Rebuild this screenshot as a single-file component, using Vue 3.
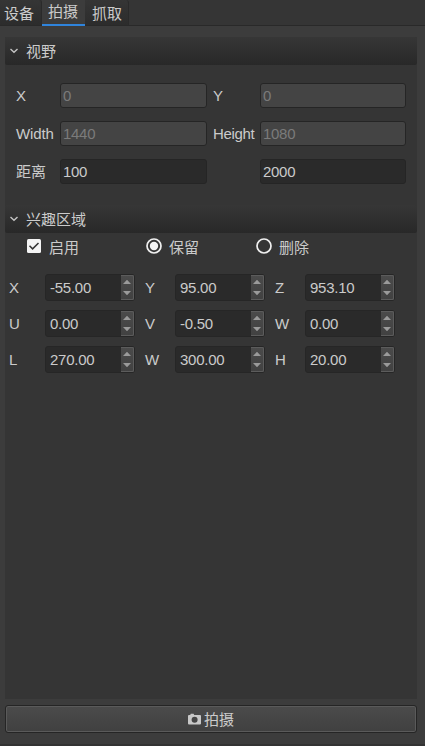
<script setup>
import { ref } from 'vue'

const tabs = ['设备', '拍摄', '抓取']
const active = ref('拍摄')
const fields = [
  { label: 'X', value: '0', disabled: true },
  { label: 'Y', value: '0', disabled: true },
  { label: 'Width', value: '1440', disabled: true },
  { label: 'Height', value: '1080', disabled: true },
  { label: '距离', value: '100' },
  { label: '', value: '2000' },
]
const spins = [
  { label: 'X', value: '-55.00' },
  { label: 'Y', value: '95.00' },
  { label: 'Z', value: '953.10' },
  { label: 'U', value: '0.00' },
  { label: 'V', value: '-0.50' },
  { label: 'W', value: '0.00' },
  { label: 'L', value: '270.00' },
  { label: 'W', value: '300.00' },
  { label: 'H', value: '20.00' },
]
</script>

<template>
  <div class="window">
    <nav class="tabs">
      <div v-for="t in tabs" :key="t" class="tab" :class="{ active: t === active }" @click="active = t">{{ t }}</div>
    </nav>

    <main class="panel">
      <header class="section-head">
        <svg class="chevron" viewBox="0 0 10 8"><path d="M1.5 2 L5 5.3 L8.5 2" /></svg>
        <span>视野</span>
      </header>
      <div class="fields">
        <template v-for="(f, i) in fields" :key="i">
          <label class="field-label" :class="{ cjk: f.label === '距离' }">{{ f.label }}</label>
          <div class="field" :class="{ disabled: f.disabled }">{{ f.value }}</div>
        </template>
      </div>

      <header class="section-head">
        <svg class="chevron" viewBox="0 0 10 8"><path d="M1.5 2 L5 5.3 L8.5 2" /></svg>
        <span>兴趣区域</span>
      </header>
      <div class="options">
        <div class="option">
          <svg class="check" viewBox="0 0 14 14">
            <rect width="14" height="14" rx="1.5" fill="#f4f4f4" />
            <path d="M2.5 6.8 L5.6 9.9 L11.5 4" fill="none" stroke="#333" stroke-width="1.5" />
          </svg>
          <span>启用</span>
        </div>
        <div class="option">
          <svg class="radio" viewBox="0 0 16 16">
            <circle cx="8" cy="8" r="7" fill="none" stroke="#f0f0f0" stroke-width="1.7" />
            <circle cx="8" cy="8" r="4.2" fill="#f4f4f4" />
          </svg>
          <span>保留</span>
        </div>
        <div class="option">
          <svg class="radio" viewBox="0 0 16 16">
            <circle cx="8" cy="8" r="7" fill="none" stroke="#f0f0f0" stroke-width="1.7" />
          </svg>
          <span>删除</span>
        </div>
      </div>
      <div class="spins">
        <div v-for="(s, i) in spins" :key="i" class="spin-cell">
          <label class="spin-label">{{ s.label }}</label>
          <div class="spin">
            <span class="spin-value">{{ s.value }}</span>
            <svg class="stepper" viewBox="0 0 13 25">
              <path d="M2 9 L6 4.8 L10 9 Z M2 16 L6 20.2 L10 16 Z" fill="#9a9a9a" />
            </svg>
          </div>
        </div>
      </div>
    </main>

    <button class="capture">
      <svg class="camera" viewBox="0 0 13 12">
        <path fill="#c8c8c8" fill-rule="evenodd" d="M1 2 H2.2 L2.8 .7 H5.6 L6.2 2 H12 Q13 2 13 3 V10.4 Q13 11.4 12 11.4 H1 Q0 11.4 0 10.4 V3 Q0 2 1 2 Z M6.6 3.7 A3 3 0 1 0 6.6 9.7 A3 3 0 1 0 6.6 3.7 Z" />
      </svg>
      <span>拍摄</span>
    </button>
  </div>
</template>

<style>
body {
  background: #3c3c3c;
}
</style>

<style scoped>
.window {
  box-sizing: border-box;
  width: 425px;
  height: 746px;
  display: flex;
  flex-direction: column;
  background: #3c3c3c;
  border-bottom: 2px solid #333;
  color: #cbcbcb;
  font: 15px/18px "Liberation Sans", "Noto Sans CJK SC", sans-serif;
  overflow: hidden;
}
.tabs {
  box-sizing: border-box;
  flex: none;
  display: flex;
  height: 26px;
  background: #353535;
  border-bottom: 1px solid #292929;
}
.tab {
  box-sizing: border-box;
  height: 25px;
  width: 44px;
  padding: 5px 0 0 7px;
  border-right: 1px solid #2a2a2a;
  border-radius: 0 3px 0 0;
  background: linear-gradient(#353535, #2c2c2c);
  white-space: nowrap;
}
.tab:first-child {
  width: 42px;
  padding-left: 4px;
}
.tab.active {
  width: 43px;
  height: 26px;
  padding: 3px 0 0 6px;
  border-bottom: 2px solid #2f84dc;
  border-right: 0;
  border-radius: 0;
  background: #3c3c3c;
}
.panel {
  flex: none;
  width: 412px;
  height: 662px;
  margin: 11px 0 0 5px;
  background: #353535;
}
.section-head {
  display: flex;
  align-items: center;
  height: 28px;
  padding-left: 4px;
  gap: 7px;
  background: linear-gradient(#363636, #282828);
  border-radius: 2px;
}
.section-head span {
  padding-top: 2px;
}
.chevron {
  width: 10px;
  height: 8px;
  fill: none;
  stroke: #c4c4c4;
  stroke-width: 1.4;
}
.fields {
  display: grid;
  grid-template-columns: 44px 147px 53px 146px;
  grid-auto-rows: 25px;
  row-gap: 13px;
  padding: 18px 0 21px 11px;
}
.field-label {
  line-height: 25px;
  white-space: nowrap;
  letter-spacing: -0.1px;
}
.field-label:nth-child(4n + 3) {
  margin-left: 6px;
  letter-spacing: -0.35px;
}
.field-label.cjk {
  padding-top: 1px;
  line-height: 24px;
  letter-spacing: 0;
}
.field {
  box-sizing: border-box;
  height: 25px;
  padding-left: 2px;
  line-height: 23px;
  letter-spacing: -0.3px;
  border: 1px solid #252525;
  border-radius: 3px;
  background: #2a2a2a;
}
.field.disabled {
  color: #7b7b7b;
  background: #444;
}
.options {
  display: grid;
  grid-template-columns: 119px 110px 110px;
  height: 28px;
  padding-left: 22px;
}
.option {
  display: flex;
  align-items: center;
  height: 26px;
  gap: 7px;
}
.option span {
  padding-top: 3px;
}
.check {
  width: 14px;
  height: 14px;
  margin-right: 1px;
}
.radio {
  width: 16px;
  height: 16px;
}
.spins {
  display: grid;
  grid-template-columns: 136px 130px 120px;
  row-gap: 9px;
  padding: 13px 0 0 4px;
}
.spin-cell {
  display: flex;
  height: 27px;
}
.spin-label {
  width: 30px;
  line-height: 27px;
}
.spin-cell:nth-child(3n + 1) .spin-label {
  width: 36px;
}
.spin {
  box-sizing: border-box;
  display: flex;
  width: 90px;
  height: 27px;
  border: 1px solid #262626;
  border-radius: 3px;
  background: #2a2a2a;
}
.spin-value {
  flex: 1;
  padding-left: 4px;
  line-height: 25px;
  letter-spacing: -0.25px;
}
.stepper {
  box-sizing: border-box;
  width: 13px;
  height: 25px;
  background: linear-gradient(#4b4b4b, #414141);
  border-radius: 0 2px 2px 0;
  box-shadow: inset -1px 0 #5c5c5c, inset 0 1px #5c5c5c, inset 0 -1px #5c5c5c;
}
.capture {
  box-sizing: border-box;
  flex: none;
  display: flex;
  align-items: center;
  justify-content: center;
  gap: 3px;
  width: 412px;
  height: 28px;
  margin: 6px 0 0 5px;
  padding: 0;
  border: 1px solid #252525;
  border-radius: 3px;
  background: linear-gradient(#4b4b4b, #404040);
  box-shadow: inset 0 0 0 1px #5a5a5a;
  color: inherit;
  font: inherit;
}
.capture span {
  padding-top: 2px;
}
.camera {
  width: 13px;
  height: 12px;
}
</style>
